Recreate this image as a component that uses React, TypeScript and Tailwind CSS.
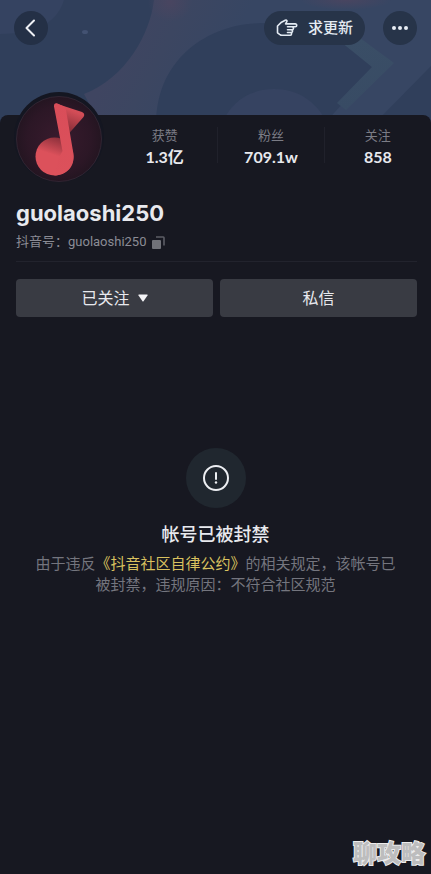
import type { ReactNode } from "react";

const STATS = [
  { label: "获赞", value: "1.3亿" },
  { label: "粉丝", value: "709.1w" },
  { label: "关注", value: "858" },
];

function BannerArt() {
  return (
    <svg
      aria-hidden="true"
      viewBox="0 0 431 124"
      preserveAspectRatio="xMidYMin slice"
      className="absolute inset-0 h-full w-full"
    >
      <defs>
        <linearGradient id="band" gradientUnits="userSpaceOnUse" x1="130" y1="30" x2="215" y2="75">
          <stop offset="0" stopColor="#3f4561" />
          <stop offset="0.4" stopColor="#3c4661" />
          <stop offset="1" stopColor="#374663" />
        </linearGradient>
        <linearGradient id="chevron" x1="0" y1="0" x2="0" y2="1">
          <stop offset="0" stopColor="#3a4e66" />
          <stop offset="1" stopColor="#384b64" />
        </linearGradient>
        <radialGradient id="glow">
          <stop offset="0" stopColor="#494560" />
          <stop offset="1" stopColor="#494560" stopOpacity="0" />
        </radialGradient>
      </defs>
      <rect width="431" height="124" fill="#303f5b" />
      <path d="M0 0h64C58 20 40 34 0 34z" fill="#354361" />
      <path d="M154 0C150 34 126 78 84 94L100 124h331V0z" fill="url(#band)" />
      <ellipse cx="170" cy="2" rx="22" ry="20" fill="url(#glow)" />
      <path d="M156 124C156 62 204 24 262 23c40 0 76 8 90 22l22 24-50 55z" fill="#303f5b" />
      <path d="M222 124c8-22 28-35 52-35s42 12 54 35z" fill="#364361" />
      <path d="M336 38h24l34 25-48 47-9-7 35-36z" fill="url(#chevron)" />
      <path d="M431 66v58h-57z" fill="#303f5b" />
      <ellipse cx="346" cy="0" rx="46" ry="10" fill="url(#glow)" />
      <ellipse cx="85" cy="32" rx="3" ry="2" fill="#435272" />
    </svg>
  );
}

function PointingHand() {
  return (
    <svg
      aria-hidden="true"
      viewBox="0 0 22 18"
      fill="none"
      stroke="currentColor"
      strokeWidth="1.6"
      strokeLinecap="round"
      strokeLinejoin="round"
      className="h-[18px] w-[22px]"
    >
      <path d="M1.500 7 5.500 3.200 9.300 1.200c1.300-.6 2.100.6 1.400 1.700L9.600 4.900h9.700a1.450 1.450 0 0 1 0 2.900h-2.800c1.400.3 1.300 2.800-.3 2.900h-.5c1.300.3 1.100 2.700-.4 2.800h-.4c1.100.4.8 2.800-.8 2.800H5.600c-1 0-1.400-.6-2-1L1.500 13.800z" />
      <path d="M11.500 7.800h5M11.500 10.700h4M11.500 13.500h3" />
    </svg>
  );
}

function Avatar() {
  return (
    <svg role="img" aria-label="guolaoshi250" viewBox="0 0 90 92" className="h-[92px] w-[90px]">
      <defs>
        <radialGradient id="disc" cx="0.5" cy="0.5" r="0.5">
          <stop offset="0" stopColor="#381b2d" />
          <stop offset="0.75" stopColor="#2c1726" />
          <stop offset="1" stopColor="#241521" />
        </radialGradient>
        <linearGradient id="flag" x1="0.7" y1="0" x2="0.35" y2="1">
          <stop offset="0.25" stopColor="#d34d57" />
          <stop offset="1" stopColor="#7b2933" />
        </linearGradient>
        <linearGradient id="head" x1="0.6" y1="0" x2="0.45" y2="0.45">
          <stop offset="0" stopColor="#8d303b" />
          <stop offset="1" stopColor="#dc515b" />
        </linearGradient>
        <linearGradient id="stem" x1="0" y1="0" x2="0" y2="1">
          <stop offset="0" stopColor="#d94d59" />
          <stop offset="1" stopColor="#dc515b" />
        </linearGradient>
      </defs>
      <circle cx="45" cy="46" r="45" fill="#141621" />
      <circle cx="45" cy="48" r="42.500" fill="url(#disc)" stroke="#3a2b39" strokeWidth="0.700" />
      <path d="M42 12.500 68 21q3.500 1.500 1.500 5L54.500 43z" fill="url(#flag)" />
      <circle cx="40.500" cy="65.500" r="19" fill="url(#head)" />
      <path d="M40 15.500q-.2-4 3.500-3l6.500 3q1.500.8 2 3.500l7.300 43C61.500 76 52 84.500 40.500 84.500l4-17L48.500 60z" fill="url(#stem)" />
    </svg>
  );
}

function ActionButton({ children }: { children: ReactNode }) {
  return (
    <button
      type="button"
      className="flex h-[38px] flex-1 items-center justify-center gap-2 rounded-sm bg-[#393b43] text-base text-[#e8e9ee]"
    >
      {children}
    </button>
  );
}

export default function App() {
  return (
    <div className="relative flex min-h-screen flex-col bg-[#171821] font-['Inter','Noto_Sans_CJK_SC',sans-serif] text-[#e8e9ee]">
      <header className="relative h-[124px]">
        <BannerArt />
        <div className="relative flex items-center px-3.5 pt-[11px]">
          <button
            type="button"
            aria-label="返回"
            className="flex size-[34px] items-center justify-center rounded-full bg-[#243046]"
          >
            <svg
              viewBox="0 0 12 18"
              fill="none"
              stroke="#eef0f5"
              strokeWidth="2"
              strokeLinecap="round"
              strokeLinejoin="round"
              className="h-[18px] w-3"
            >
              <path d="M9 1.500 1.500 9 9 16.500" />
            </svg>
          </button>
          <button
            type="button"
            className="ml-auto flex h-[34px] items-center gap-2.5 rounded-full bg-[#273449] px-3 text-[15px] font-medium text-[#e4ebf3]"
          >
            <PointingHand />
            求更新
          </button>
          <button
            type="button"
            aria-label="更多"
            className="ml-[18px] flex size-[34px] items-center justify-center gap-0.5 rounded-full bg-[#273449]"
          >
            <span className="size-1 rounded-full bg-[#e8edf4]" />
            <span className="size-1 rounded-full bg-[#e8edf4]" />
            <span className="size-1 rounded-full bg-[#e8edf4]" />
          </button>
        </div>
      </header>

      <main className="relative -mt-[9px] flex-1 rounded-t-lg bg-[#171821]">
        <section className="flex items-start pl-3.5">
          <div className="-mt-6 shrink-0">
            <Avatar />
          </div>
          <dl className="mt-3 ml-2 grid flex-1 grid-cols-3 divide-x divide-[#20212b] text-center">
            {STATS.map((s) => (
              <div key={s.label} className="h-9">
                <dt className="text-[13px] leading-4 text-[#7b7c85]">{s.label}</dt>
                <dd className="pt-0.5 font-['Lato','Noto_Sans_CJK_SC',sans-serif] text-base leading-6 font-bold">
                  {s.value}
                </dd>
              </div>
            ))}
          </dl>
        </section>

        <section className="pr-3.5 pl-4">
          <h1 className="mt-3.5 text-[22px] leading-8 font-bold">guolaoshi250</h1>
          <div className="mt-[3px] flex items-center gap-1.5 border-b border-[#22232d] pb-[9px] font-['Roboto','Noto_Sans_CJK_SC',sans-serif] text-[13px] leading-5 text-[#8b8c95]">
            <span>抖音号：guolaoshi250</span>
            <button type="button" aria-label="复制抖音号">
              <svg viewBox="0 0 13 13" className="size-[13px]">
                <rect y="4" width="9" height="9" rx="1" fill="#717279" />
                <path d="M4 1h7.200a.8.8 0 0 1 .8.8V9.500" fill="none" stroke="#5d5e66" strokeWidth="1.600" />
              </svg>
            </button>
          </div>
          <div className="mt-[17px] flex gap-[7px]">
            <ActionButton>
              已关注
              <svg aria-hidden="true" viewBox="0 0 10 8" className="h-2 w-2.5">
                <path d="M1 .5h8q1 0 .5 1L5.700 7q-.7 1-1.400 0L.5 1.500Q0 .5 1 .5z" fill="#f4f4f7" />
              </svg>
            </ActionButton>
            <ActionButton>私信</ActionButton>
          </div>
        </section>

        <section className="flex flex-col items-center px-8 pt-[131px] text-center">
          <div className="flex size-[60px] items-center justify-center rounded-full bg-[#20272f]">
            <svg
              aria-hidden="true"
              viewBox="0 0 26 26"
              fill="none"
              stroke="#eceef2"
              strokeWidth="2"
              className="size-[26px]"
            >
              <circle cx="13" cy="13" r="12" />
              <path d="M13 8v6" strokeLinecap="round" />
              <circle cx="13" cy="17.500" r="1.200" fill="#eceef2" stroke="none" />
            </svg>
          </div>
          <h2 className="mt-[13px] text-lg leading-7 font-medium">帐号已被封禁</h2>
          <p className="mt-1 text-[15px] leading-[21px] text-[#74757e]">
            由于违反
            <a href="#convention" className="text-[#d9c15f]">
              《抖音社区自律公约》
            </a>
            的相关规定，该帐号已被封禁，违规原因：不符合社区规范
          </p>
        </section>
      </main>

      <span className="absolute right-1.5 bottom-1 text-2xl leading-8 font-black text-[#bdbdbe] [-webkit-text-stroke:2px_#ececed] [paint-order:stroke_fill]">
        聊攻略
      </span>
    </div>
  );
}
